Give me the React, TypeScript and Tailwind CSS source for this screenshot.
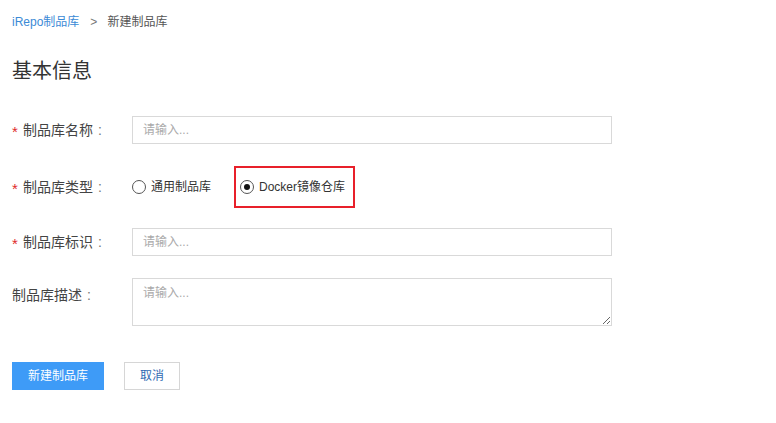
import { useState } from "react";

const font = { fontFamily: '"Liberation Sans", "Noto Sans CJK SC", sans-serif' };

function Label({ text, required, top }: { text: string; required?: boolean; top?: boolean }) {
  return (
    <div className={`flex h-7 w-[120px] shrink-0 items-center text-[14px] text-[#444] ${top ? "mt-[3px]" : ""}`}>
      {required ? (
        <span className="relative top-[1px] mr-[3px] w-[8px] text-[15px] leading-none text-[#e02a2a]">*</span>
      ) : null}
      <span>{text}</span>
      <span className="ml-[5px] text-[#777]">:</span>
    </div>
  );
}

function Radio({ checked, label, onClick }: { checked: boolean; label: string; onClick: () => void }) {
  return (
    <button type="button" onClick={onClick} className="flex items-center gap-[5px] text-[12px] text-[#333]">
      <span className="flex h-[14px] w-[14px] items-center justify-center rounded-full border border-[#555] bg-white">
        {checked ? <span className="h-[6px] w-[6px] rounded-full bg-[#111]" /> : null}
      </span>
      {label}
    </button>
  );
}

export default function App() {
  const [type, setType] = useState<"generic" | "docker">("docker");

  return (
    <div className="min-h-[423px] w-[776px] bg-white px-3 pt-3" style={font}>
      <div className="flex h-5 items-center text-[12px]">
        <a className="text-[#3b8ad6]">iRepo制品库</a>
        <span className="ml-[11px] mr-[10px] text-[#777]">&gt;</span>
        <span className="text-[#555]">新建制品库</span>
      </div>

      <h1 className="mt-[25px] h-7 text-[20px] leading-7 text-[#333]">基本信息</h1>

      <form className="mt-[31px] flex flex-col">
        <div className="flex items-center">
          <Label text="制品库名称" required />
          <input
            placeholder="请输入..."
            className="h-7 w-[480px] border border-[#d9d9d9] px-[10px] text-[12px] text-[#333] outline-none placeholder:text-[#aaa]"
          />
        </div>

        <div className="mt-[22px] flex h-[42px] items-center">
          <Label text="制品库类型" required />
          <Radio checked={type === "generic"} label="通用制品库" onClick={() => setType("generic")} />
          <span className="ml-[23px] flex h-[42px] w-[121px] items-center border-2 border-[#e8202a] pl-[4px]">
            <Radio checked={type === "docker"} label="Docker镜像仓库" onClick={() => setType("docker")} />
          </span>
        </div>

        <div className="mt-5 flex items-center">
          <Label text="制品库标识" required />
          <input
            placeholder="请输入..."
            className="h-7 w-[480px] border border-[#d9d9d9] px-[10px] text-[12px] text-[#333] outline-none placeholder:text-[#aaa]"
          />
        </div>

        <div className="mt-[22px] flex items-start">
          <Label text="制品库描述" top />
          <textarea
            placeholder="请输入..."
            className="h-12 w-[480px] resize-y border border-[#d9d9d9] px-[10px] py-[6px] text-[12px] leading-4 text-[#333] outline-none placeholder:text-[#aaa]"
          />
        </div>

        <div className="mt-9 flex items-center gap-5">
          <button type="button" className="h-7 w-[92px] bg-[#3e9bf7] text-[12px] text-white">
            新建制品库
          </button>
          <button type="button" className="h-7 w-14 border border-[#d6d6d6] bg-white text-[12px] text-[#2f6bb3]">
            取消
          </button>
        </div>
      </form>
    </div>
  );
}
